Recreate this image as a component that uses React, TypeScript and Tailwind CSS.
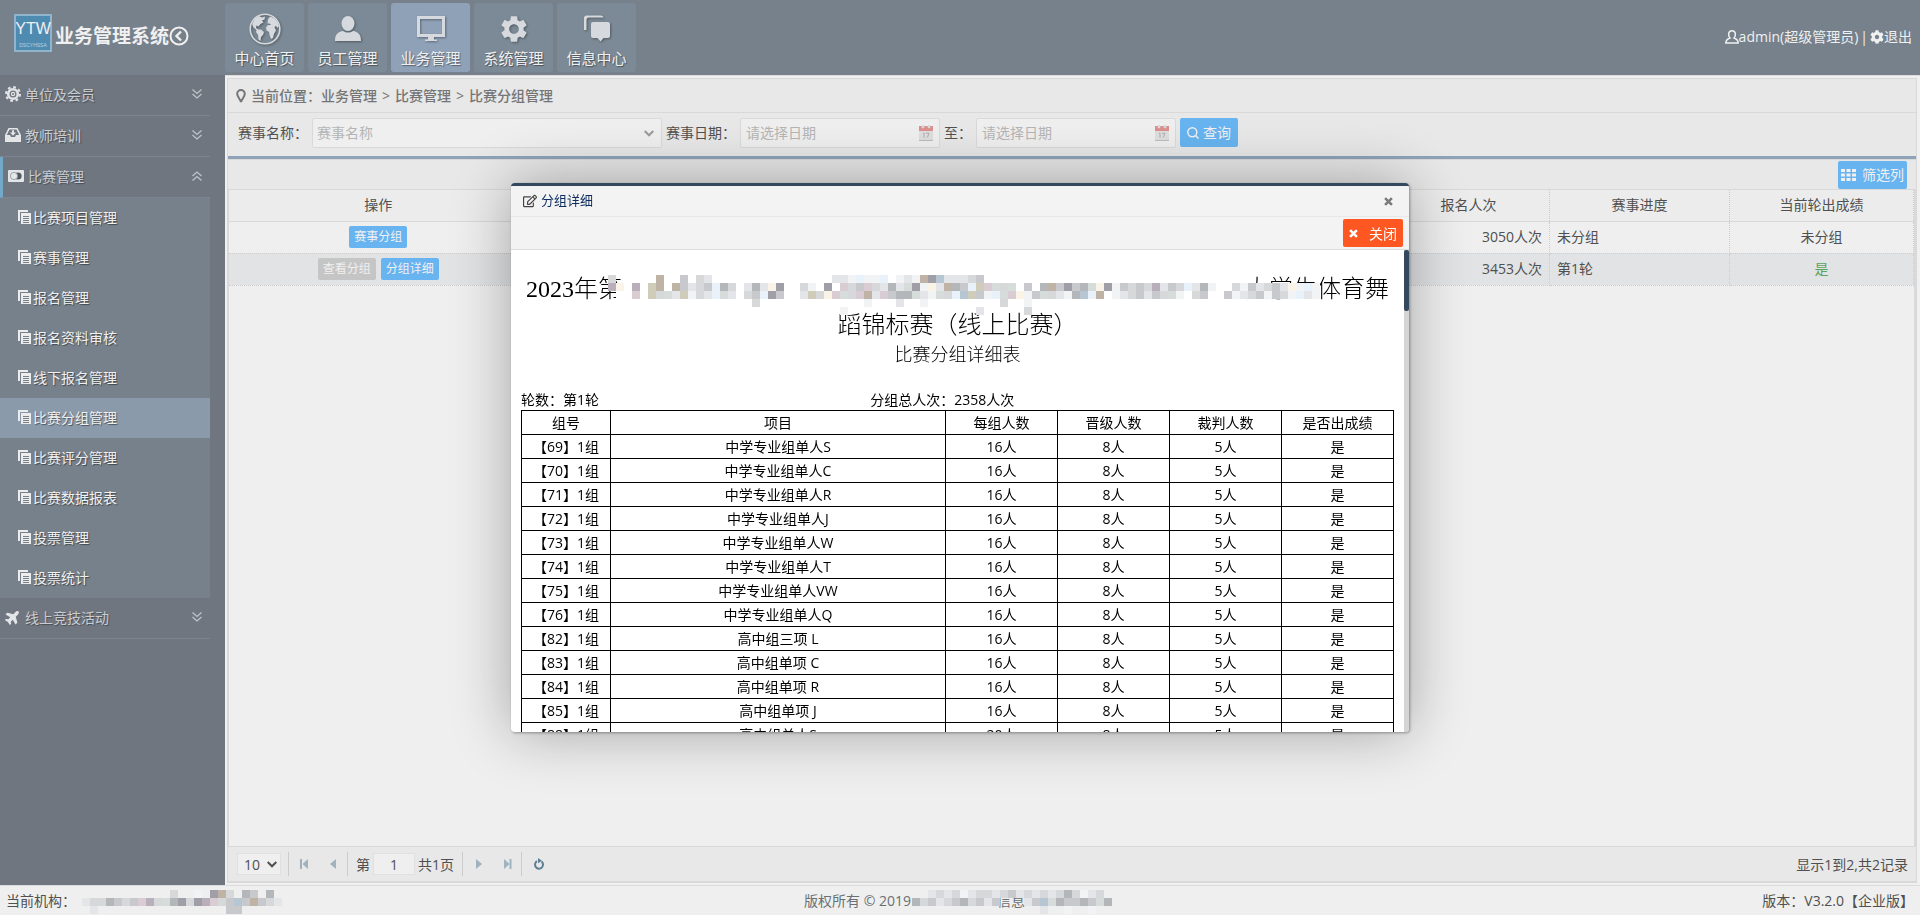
import { useState, type ReactNode } from 'react';
import { FaCog, FaPlane, FaRegEdit } from 'react-icons/fa';
import { MdSettings } from 'react-icons/md';

type IconProps = { className?: string };

function GlobeIcon({ className }: IconProps) {
  return (
    <svg viewBox="0 0 32 32" className={className} fill="currentColor">
      <circle cx="16" cy="16" r="14.8" fill="none" stroke="currentColor" strokeWidth="1.6" />
      <path d="M3 11 L6 5.5 L10 3 L13 4.5 L16 3.5 L15.5 6.5 L13 7.5 L14.5 9.5 L11.5 11 L9.5 13.5 L7.5 12.5 L7 15 L9.5 16.5 L12 16.5 L15 19 L14 22 L12 24 L11.5 28 L9.5 26.5 L9 22 L7 19 L7.5 17 L4.5 14.5 Z" />
      <path d="M19 6.5 L21 3.5 L25 5 L28.5 9 L30 13 L28.5 15 L27 13 L25.5 14 L27 17.5 L25 21 L24 25 L22 26 L20.5 22 L20 19 L17.5 17.5 L17 14.5 L19 12 L22 12 L20.5 10.5 L18.5 10.5 Z" />
    </svg>
  );
}

function PersonIcon({ className }: IconProps) {
  return (
    <svg viewBox="0 0 32 32" className={className} fill="currentColor">
      <ellipse cx="16" cy="10.5" rx="6.5" ry="7.5" />
      <path d="M3 28 C3 21 6 18.8 11 18 C14 20 18 20 21 18 C26 18.8 29 21 29 28 Z" />
    </svg>
  );
}

function MonitorIcon({ className }: IconProps) {
  return (
    <svg viewBox="0 0 32 32" className={className} fill="currentColor">
      <path fillRule="evenodd" d="M2 3 H30 V24 H2 Z M5 6 V21 H27 V6 Z" />
      <path d="M13 24 H19 V26.5 H22 V28 H10 V26.5 H13 Z" />
    </svg>
  );
}

function ChatIcon({ className }: IconProps) {
  return (
    <svg viewBox="0 0 32 32" className={className} fill="currentColor">
      <path d="M3 17 V5 Q3 2.5 5.5 2.5 H20 Q22 2.5 22.5 4.5 H8 Q5.5 4.5 5.5 7 V17 Z" />
      <path d="M12 9 H27 Q29 9 29 11 V23 Q29 25 27 25 H22.5 L19.5 28.5 L16.5 25 H12 Q10 25 10 23 V11 Q10 9 12 9 Z" />
    </svg>
  );
}

function BadgeIcon({ className }: IconProps) {
  return (
    <svg viewBox="0 0 16 16" className={className} fill="none" stroke="currentColor">
      <circle cx="8" cy="8" r="4.8" strokeWidth="2.6" />
      <circle cx="8" cy="8" r="7" strokeWidth="2" strokeDasharray="2.75 2.75" />
      <circle cx="8" cy="8" r="1.6" strokeWidth="1.2" />
    </svg>
  );
}

function InboxIcon({ className }: IconProps) {
  return (
    <svg viewBox="0 0 16 16" className={className} fill="currentColor">
      <path fillRule="evenodd" d="M3.5 1 H12.5 L16 8 V15 H0 V8 Z M4.5 2.4 L1.8 8 H5 L6 10 H10 L11 8 H14.2 L11.5 2.4 Z" />
      <path d="M7 3.2 H9 V5.5 H11 L8 8.8 L5 5.5 H7 Z" />
    </svg>
  );
}

function CardIcon({ className }: IconProps) {
  return (
    <svg viewBox="0 0 16 12" className={className}>
      <rect width="16" height="12" rx="1" fill="currentColor" />
      <circle cx="10" cy="6" r="3.6" fill="#4f5862" />
      <circle cx="6" cy="6" r="3.6" fill="#e6e6e6" stroke="#8b9299" strokeWidth="0.8" />
    </svg>
  );
}

function CopyIcon({ className }: IconProps) {
  return (
    <svg viewBox="0 0 14 14" className={className}>
      <path d="M0 0 H10 V2 H2 V11 H0 Z" fill="currentColor" />
      <rect x="3" y="3" width="10" height="11" fill="currentColor" />
      <path d="M5 6.5 H11 M5 8.5 H11 M5 10.5 H11 M5 12.5 H11" stroke="#76818c" strokeWidth="1" />
    </svg>
  );
}

function DoubleChevron({ up }: { up?: boolean }) {
  return (
    <svg viewBox="0 0 10 10" className="h-[10px] w-[10px] text-[#c0c4c9]" fill="none" stroke="currentColor" strokeWidth="1.3">
      {up ? <path d="M0.5 5 L5 1 L9.5 5 M0.5 9.5 L5 5.5 L9.5 9.5" /> : <path d="M0.5 0.5 L5 4.5 L9.5 0.5 M0.5 5 L5 9 L9.5 5" />}
    </svg>
  );
}

function ChevronDown({ className }: IconProps) {
  return (
    <svg viewBox="0 0 10 7" className={className} fill="none" stroke="currentColor" strokeWidth="2">
      <path d="M0.7 1 L5 5.3 L9.3 1" />
    </svg>
  );
}

function CrossIcon({ className }: IconProps) {
  return (
    <svg viewBox="0 0 10 10" className={className} stroke="currentColor" strokeWidth="2.8">
      <path d="M1.2 1.2 L8.8 8.8 M8.8 1.2 L1.2 8.8" />
    </svg>
  );
}

function CalendarIcon({ className }: IconProps) {
  return (
    <svg viewBox="0 0 14 16" className={className}>
      <rect x="0" y="1" width="14" height="15" fill="#dedede" />
      <rect x="0" y="1" width="14" height="5" fill="#e08f8f" />
      <path d="M0 15.5 H14" stroke="#bcbcbc" />
      <circle cx="4" cy="2" r="1.3" fill="#f3f3f3" stroke="#b5b5b5" strokeWidth="0.6" />
      <circle cx="10" cy="2" r="1.3" fill="#f3f3f3" stroke="#b5b5b5" strokeWidth="0.6" />
      <path d="M4 8.5 L5 8 V12.5 M7 8.3 H10 L8.3 12.5" fill="none" stroke="#a9a9a9" strokeWidth="0.9" />
    </svg>
  );
}

const tabs: { label: string; icon: ReactNode }[] = [
  { label: '中心首页', icon: <GlobeIcon className="h-8 w-8" /> },
  { label: '员工管理', icon: <PersonIcon className="h-8 w-8" /> },
  { label: '业务管理', icon: <MonitorIcon className="h-8 w-8" /> },
  { label: '系统管理', icon: <MdSettings className="h-8 w-8" /> },
  { label: '信息中心', icon: <ChatIcon className="h-8 w-8" /> },
];

const subMenu = [
  '比赛项目管理',
  '赛事管理',
  '报名管理',
  '报名资料审核',
  '线下报名管理',
  '比赛分组管理',
  '比赛评分管理',
  '比赛数据报表',
  '投票管理',
  '投票统计',
];

const groups = [
  ['【69】1组', '中学专业组单人S', '16人'],
  ['【70】1组', '中学专业组单人C', '16人'],
  ['【71】1组', '中学专业组单人R', '16人'],
  ['【72】1组', '中学专业组单人J', '16人'],
  ['【73】1组', '中学专业组单人W', '16人'],
  ['【74】1组', '中学专业组单人T', '16人'],
  ['【75】1组', '中学专业组单人VW', '16人'],
  ['【76】1组', '中学专业组单人Q', '16人'],
  ['【82】1组', '高中组三项 L', '16人'],
  ['【83】1组', '高中组单项 C', '16人'],
  ['【84】1组', '高中组单项 R', '16人'],
  ['【85】1组', '高中组单项 J', '16人'],
  ['【88】1组', '高中组单人S', '20人'],
];

// Redaction mosaics. One letter per 8px cell, '.' is transparent.
const shades: Record<string, string> = {
  w: '#ffffff',
  a: '#f2f3f5',
  b: '#e4e5e8',
  c: '#d7d8d9',
  d: '#c7c9cd',
  e: '#b3b7ba',
  f: '#a09ea6',
  g: '#cfccb9',
  h: '#bfb3a5',
  i: '#d9cdd3',
  j: '#b9afbb',
  k: '#e9f1fa',
  l: '#faf3e8',
  m: '#b6c6d3',
  n: '#d5dcda',
};

const titleMosaic = [
  'c.....h..d.cb...............bbakaak.abahfmbbbcd..........................................',
  'jl.j.ghwhdbcdkecwbeblfwwcawfwicdicbebnfalbhedkgincnwdwehdfdenlfadcdcjbdckbeawwcadbcdblaka',
  '.w.i.gcnbgacbknbwcdkfdwwbgclincihbideenbanckmgdakniladncbaemkhwabcdbdcnawcdwwdabcdadcakba',
  '..................c.............a...b..a.........c..a....................................',
  '.............................a................b.....c....................................',
];
const orgMosaic = ['............c..a.fhc.ed.e.', '.bccedcdijcnefcfjicdmdhdcb', '..b................dd.....'];
const copyMosaic = ['..bcbcabccbcdbcbcbcecabc.', 'ecdbcdecdbd...bdmneddedne', '................b..a..a..'];

function Mosaic({ rows, className }: { rows: string[]; className: string }) {
  const cols = Math.max(...rows.map((r) => r.length));
  return (
    <svg
      aria-hidden="true"
      width={cols * 8}
      height={rows.length * 8}
      className={`pointer-events-none absolute ${className}`}
      shapeRendering="crispEdges"
    >
      {rows.map((row, y) =>
        row.split('').map((cell, x) =>
          cell === '.' ? null : <rect key={`${x}-${y}`} x={x * 8} y={y * 8} width="8" height="8" fill={shades[cell]} />
        )
      )}
    </svg>
  );
}

function Header() {
  return (
    <header className="flex h-[75px] shrink-0 items-start bg-[#76818c] text-[#f0f0f0]">
      <div className="flex w-[225px] items-end pt-3.5 pl-3.5">
        <div className="flex h-[38px] w-[38px] flex-col items-center justify-center border-2 border-[#8fb4cb] bg-[#4f8bb0] font-['Liberation_Sans',sans-serif]">
          <span className="text-[16px] leading-[24px]">YTW</span>
          <span className="text-[5px] leading-[8px] text-[#b9d2e0]">DSCYHSSA</span>
        </div>
        <div className="ml-[3px] flex items-center">
          <h1 className="text-[19px] leading-[32px] font-bold">业务管理系统</h1>
          <button aria-label="收起菜单">
            <svg viewBox="0 0 20 20" className="h-5 w-5" fill="none" stroke="currentColor" strokeWidth="2">
              <circle cx="10" cy="10" r="8.5" />
              <path d="M12 5.5 L7.5 10 L12 14.5" strokeWidth="2.4" />
            </svg>
          </button>
        </div>
      </div>
      <nav className="flex gap-1 pt-[3px]">
        {tabs.map((tab) => (
          <button
            key={tab.label}
            className={`flex h-[69px] w-[79px] flex-col items-center rounded-[3px] pt-2 ${
              tab.label === '业务管理' ? 'bg-[#8fa1b7]' : 'bg-[#7b8a96]'
            }`}
          >
            <span className="flex h-9 items-center justify-center text-[#d6d9dd] drop-shadow-[1px_1px_1px_rgba(0,0,0,0.35)]">
              {tab.icon}
            </span>
            <span className="text-[15px] leading-[22px] [text-shadow:1px_1px_1px_rgba(0,0,0,0.4)]">{tab.label}</span>
          </button>
        ))}
      </nav>
      <div className="ml-auto flex items-center pt-[27px] pr-2 text-[14px] leading-[20px]">
        <svg viewBox="0 0 14 14" className="h-3.5 w-3.5" fill="none" stroke="currentColor" strokeWidth="1.5">
          <path d="M5 8 C2.5 5 3.5 0.8 7 0.8 C10.5 0.8 11.5 5 9 8 C11.5 9 13.2 10 13.2 13 H0.8 C0.8 10 2.5 9 5 8 Z" />
        </svg>
        <span>admin(超级管理员)</span>
        <span className="px-0.5">|</span>
        <a href="#" className="flex items-center">
          <FaCog className="h-3.5 w-3.5" />
          退出
        </a>
      </div>
    </header>
  );
}

function MenuSection({ icon, label, open }: { icon: ReactNode; label: string; open?: boolean }) {
  return (
    <button
      className={`flex h-[41px] w-full items-center gap-1 border-b border-[#7b8591] pr-2 pb-0.5 text-[14px] text-[#c9cdd2] [text-shadow:1px_1px_1px_rgba(0,0,0,0.35)] ${
        open ? 'border-l-[3px] border-l-[#72a9c8] pl-[5px]' : 'pl-[5px]'
      }`}
    >
      {icon}
      <span className="flex-1 text-left">{label}</span>
      <DoubleChevron up={open} />
    </button>
  );
}

function Sidebar() {
  const [current, setCurrent] = useState('比赛分组管理');

  return (
    <aside className="w-[225px] shrink-0 bg-[#6f7680] pr-[15px]">
      <MenuSection icon={<BadgeIcon className="h-4 w-4 text-[#e3e5e7]" />} label="单位及会员" />
      <MenuSection icon={<InboxIcon className="h-4 w-4 text-[#e3e5e7]" />} label="教师培训" />
      <MenuSection icon={<CardIcon className="h-3 w-4 text-[#e3e5e7]" />} label="比赛管理" open />
      <ul className="bg-[#76818c]">
        {subMenu.map((item) => (
          <li key={item}>
            <button
              onClick={() => setCurrent(item)}
              className={`flex h-10 w-full items-center gap-px pb-0.5 pl-[18px] text-[14px] text-[#f0f0f0] [text-shadow:1px_1px_1px_rgba(0,0,0,0.45)] ${
                current === item ? 'bg-[#8a9aaa]' : ''
              }`}
            >
              <CopyIcon className="h-3.5 w-3.5 text-[#ececec]" />
              {item}
            </button>
          </li>
        ))}
      </ul>
      <MenuSection icon={<FaPlane className="h-4 w-4 -rotate-45 text-[#e3e5e7]" />} label="线上竞技活动" />
    </aside>
  );
}

function DateField({ id, label }: { id: string; label: string }) {
  return (
    <>
      <label htmlFor={id}>{label}</label>
      <span className="relative flex">
        <input
          id={id}
          placeholder="请选择日期"
          className="h-[30px] w-[200px] rounded-[2px] border border-[#d9d9d9] bg-[#efefef] pl-[5px] text-[14px] placeholder:text-[#b5b5b5]"
        />
        <CalendarIcon className="pointer-events-none absolute top-[7px] right-[7px] h-4 w-3.5" />
      </span>
    </>
  );
}

function FilterForm() {
  return (
    <form className="flex h-[43px] items-center gap-1 pb-1 pl-[10px] text-[14px]" onSubmit={(e) => e.preventDefault()}>
      <label htmlFor="match">赛事名称：</label>
      <span className="relative flex">
        <select
          id="match"
          className="h-[30px] w-[350px] appearance-none rounded-[2px] border border-[#d9d9d9] bg-[#efefef] pl-1 text-[#b5b5b5]"
        >
          <option>赛事名称</option>
        </select>
        <ChevronDown className="pointer-events-none absolute top-3 right-2 h-[7px] w-[10px] text-[#9b9b9b]" />
      </span>
      <DateField id="from" label="赛事日期：" />
      <DateField id="to" label="至：" />
      <button className="flex h-[29px] w-[58px] items-center justify-center gap-1 rounded-[2px] bg-[#67b4f0] text-[#f0f0f0]">
        <svg viewBox="0 0 12 12" className="h-3 w-3" fill="none" stroke="currentColor" strokeWidth="1.5">
          <circle cx="5.3" cy="5.3" r="4.5" />
          <path d="M8.5 8.5 L11.5 11.5" />
        </svg>
        查询
      </button>
    </form>
  );
}

function MatchTable() {
  return (
    <table className="w-full table-fixed border-collapse text-[14px] leading-[20px]">
      <colgroup>
        <col className="w-[299px]" />
        <col />
        <col className="w-[162px]" />
        <col className="w-[180px]" />
        <col className="w-[184px]" />
      </colgroup>
      <thead>
        <tr className="h-[31px] border-b border-[#d9d9d9] bg-[#ececec]">
          <th className="border-r border-dotted border-r-[#cccccc] font-normal">操作</th>
          <th className="border-r border-dotted border-r-[#cccccc] font-normal" />
          <th className="border-r border-dotted border-r-[#cccccc] font-normal">报名人次</th>
          <th className="border-r border-dotted border-r-[#cccccc] font-normal">赛事进度</th>
          <th className="border-r border-dotted border-r-[#cccccc] font-normal">当前轮出成绩</th>
        </tr>
      </thead>
      <tbody>
        <tr className="h-8">
          <td className="border-r border-b border-dotted border-[#cccccc] text-center">
            <button className="h-[22px] w-[58px] rounded-[2px] bg-[#67b4f0] align-middle text-[12px] text-[#f0f0f0]">赛事分组</button>
          </td>
          <td className="border-r border-b border-dotted border-[#cccccc]" />
          <td className="border-r border-b border-dotted border-[#cccccc] pr-[7px] text-right">3050人次</td>
          <td className="border-r border-b border-dotted border-[#cccccc] pl-[7px]">未分组</td>
          <td className="border-r border-b border-dotted border-[#cccccc] text-center">未分组</td>
        </tr>
        <tr className="h-8 bg-[#e1e3e5]">
          <td className="border-r border-b border-dotted border-[#cccccc] text-center">
            <div className="flex justify-center gap-[5px]">
              <button className="h-[22px] w-[58px] rounded-[2px] bg-[#c5c5c5] text-[12px] text-[#f0f0f0]">查看分组</button>
              <button className="h-[22px] w-[58px] rounded-[2px] bg-[#67b4f0] text-[12px] text-[#f0f0f0]">分组详细</button>
            </div>
          </td>
          <td className="border-r border-b border-dotted border-[#cccccc]" />
          <td className="border-r border-b border-dotted border-[#cccccc] pr-[7px] text-right">3453人次</td>
          <td className="border-r border-b border-dotted border-[#cccccc] pl-[7px]">第1轮</td>
          <td className="border-r border-b border-dotted border-[#cccccc] text-center text-[#5aa45e]">是</td>
        </tr>
      </tbody>
    </table>
  );
}

function Separator() {
  return <span className="h-6 w-px bg-[#cccccc]" />;
}

function PagerButton({ label, children }: { label: string; children: ReactNode }) {
  return (
    <button aria-label={label} className="flex h-6 w-[29px] items-center justify-center text-[#9fb2c0]">
      <svg viewBox="0 0 12 12" className="h-3 w-3" fill="currentColor">
        {children}
      </svg>
    </button>
  );
}

function Pager() {
  return (
    <div className="flex h-[35px] shrink-0 items-center border-t border-[#d9d9d9] bg-[#e8e8e8] pr-2 pl-[9px] text-[14px]">
      <span className="relative mr-[7px] flex">
        <select
          aria-label="每页条数"
          defaultValue="10"
          className="h-[22px] w-11 appearance-none border border-[#e0e0e0] bg-[#efefef] pl-1.5"
        >
          <option>10</option>
          <option>20</option>
        </select>
        <ChevronDown className="pointer-events-none absolute top-2 right-1 h-[7px] w-[10px]" />
      </span>
      <Separator />
      <PagerButton label="首页">
        <path d="M2 1 H4 V11 H2 Z M10 1 V11 L4.5 6 Z" />
      </PagerButton>
      <PagerButton label="上一页">
        <path d="M9 1 V11 L3 6 Z" />
      </PagerButton>
      <Separator />
      <label htmlFor="page" className="ml-2">
        第
      </label>
      <input id="page" defaultValue="1" className="mx-[3px] h-[22px] w-[42px] border border-[#e0e0e0] bg-[#efefef] text-center" />
      <span className="mr-2">共1页</span>
      <Separator />
      <PagerButton label="下一页">
        <path d="M4 1 V11 L10 6 Z" />
      </PagerButton>
      <PagerButton label="末页">
        <path d="M3 1 V11 L8.5 6 Z M8.5 1 H10.5 V11 H8.5 Z" />
      </PagerButton>
      <Separator />
      <button aria-label="刷新" className="flex h-6 w-[33px] items-center justify-center text-[#5f7f95]">
        <svg viewBox="0 0 12 12" className="h-3 w-3" fill="none" stroke="currentColor" strokeWidth="2">
          <path d="M4 3.2 A4 4 0 1 0 8.5 3.5" />
          <path d="M5 0 L9 2.8 L5 5.2 Z" fill="currentColor" stroke="none" />
        </svg>
      </button>
      <span className="ml-auto">显示1到2,共2记录</span>
    </div>
  );
}

function GroupDialog({ onClose }: { onClose: () => void }) {
  return (
    <div className="pointer-events-none fixed inset-0 flex items-center justify-center">
      <section
        role="dialog"
        aria-label="分组详细"
        className="pointer-events-auto flex h-[549px] w-[898px] max-w-full flex-col overflow-hidden rounded-[4px] border-t-[3px] border-[#34495e] bg-white text-black shadow-[1px_1px_3px_rgba(0,0,0,0.35),0_0_60px_rgba(0,0,0,0.32)]"
      >
        <div className="flex h-[31px] shrink-0 items-center border-b border-[#e6e8ea] bg-[#f3f3f3] pr-4 pl-3">
          <FaRegEdit className="h-3.5 w-3.5 text-[#444444]" />
          <h2 className="ml-1 flex-1 text-[13px] text-[#0e2d5f]">分组详细</h2>
          <button aria-label="关闭窗口" onClick={onClose}>
            <CrossIcon className="h-[9px] w-[9px] text-[#7b7b7b]" />
          </button>
        </div>
        <div className="flex h-[33px] shrink-0 items-center justify-end border-b border-[#dddddd] bg-[#f3f3f3] pr-1.5">
          <button
            onClick={onClose}
            className="flex h-7 w-[60px] items-center justify-between rounded-[2px] bg-[#ff5722] px-1.5 text-[14px] text-white"
          >
            <CrossIcon className="h-[9px] w-[9px]" />
            关闭
          </button>
        </div>
        <div className="flex min-h-0 flex-1">
          <div className="min-w-0 flex-1 overflow-hidden pt-[21px] pr-[10px] pl-[10px]">
            <div className="relative text-center font-['Liberation_Serif','Noto_Sans_CJK_SC',serif] font-light">
              <div className="flex justify-between px-[5px] text-[24px] leading-[36px]">
                <span>2023年第</span>
                <span>大学生体育舞</span>
              </div>
              <div className="text-[24px] leading-[36px]">蹈锦标赛（线上比赛）</div>
              <div className="text-[18px] leading-[24px]">比赛分组详细表</div>
              <Mosaic rows={titleMosaic} className="top-1 left-[87px]" />
            </div>
            <div className="mt-[23px] flex text-[14px] leading-[20px]">
              <span className="w-2/5">轮数：第1轮</span>
              <span>分组总人次：2358人次</span>
            </div>
            <table className="w-full table-fixed border-collapse text-center text-[14px] leading-[20px]">
              <colgroup>
                <col className="w-[89px]" />
                <col />
                <col className="w-[112px]" />
                <col className="w-[112px]" />
                <col className="w-[112px]" />
                <col className="w-[112px]" />
              </colgroup>
              <thead>
                <tr className="h-6">
                  {['组号', '项目', '每组人数', '晋级人数', '裁判人数', '是否出成绩'].map((name) => (
                    <th key={name} className="border border-black font-normal">
                      {name}
                    </th>
                  ))}
                </tr>
              </thead>
              <tbody>
                {groups.map(([no, name, size]) => (
                  <tr key={no} className="h-6">
                    <td className="border border-black">{no}</td>
                    <td className="border border-black">{name}</td>
                    <td className="border border-black">{size}</td>
                    <td className="border border-black">8人</td>
                    <td className="border border-black">5人</td>
                    <td className="border border-black">是</td>
                  </tr>
                ))}
              </tbody>
            </table>
          </div>
          <div className="w-[5px] bg-[#d5d5d5]">
            <div className="h-[61px] rounded-[2px] bg-[#34495e]" />
          </div>
        </div>
      </section>
    </div>
  );
}

export default function App() {
  const [dialogOpen, setDialogOpen] = useState(true);

  return (
    <div className="flex h-screen flex-col bg-[#f0f0f0] font-['Open_Sans','Noto_Sans_CJK_SC',sans-serif] text-[#505050]">
      <Header />
      <div className="flex min-h-0 flex-1">
        <Sidebar />
        <main className="flex min-w-0 flex-1 flex-col border-t border-[#dcdcdc] pt-0.5 pr-[3px] pb-0.5 pl-0.5">
          <div className="flex min-h-0 flex-1 flex-col border border-b-2 border-[#d9d9d9] bg-[#e8e8e8]">
            <div className="flex h-[34px] items-center gap-[5px] border-b border-[#d9d9d9] pl-2 text-[14px] font-medium text-[#757575]">
              <svg viewBox="0 0 10 14" className="h-3.5 w-[10px]" fill="none" stroke="currentColor" strokeWidth="2">
                <path d="M5 13 C4.5 10.5 1.2 8 1.2 4.8 A3.8 3.8 0 0 1 8.8 4.8 C8.8 8 5.5 10.5 5 13 Z" />
              </svg>
              <span>当前位置：业务管理</span>
              <span>&gt;</span>
              <span>比赛管理</span>
              <span>&gt;</span>
              <span>比赛分组管理</span>
            </div>
            <FilterForm />
            <div className="flex min-h-0 flex-1 flex-col border-t-[3px] border-[#8fa3b8]">
              <div className="flex h-[31px] shrink-0 items-center justify-end border-y border-[#d9d9d9] pr-[9px]">
                <button className="flex h-7 w-[69px] items-center justify-between rounded-[2px] bg-[#67b4f0] px-[3px] text-[14px] text-[#f0f0f0]">
                  <svg viewBox="0 0 15 12" className="h-3 w-[15px]" fill="currentColor">
                    <path d="M0 0h4v3H0zM5.5 0h4v3h-4zM11 0h4v3h-4zM0 4.5h4v3H0zM5.5 4.5h4v3h-4zM11 4.5h4v3h-4zM0 9h4v3H0zM5.5 9h4v3h-4zM11 9h4v3h-4z" />
                  </svg>
                  筛选列
                </button>
              </div>
              <div className="min-h-0 flex-1 border-r-2 border-l border-[#d9d9d9] bg-[#efefef]">
                <MatchTable />
              </div>
              <Pager />
            </div>
          </div>
        </main>
      </div>
      <footer className="flex h-[30px] shrink-0 items-center border-t border-[#dcdcdc] bg-[#efefef] px-1.5 text-[14px]">
        <div className="relative flex-1">
          当前机构：
          <Mosaic rows={orgMosaic} className="top-0 left-[68px]" />
        </div>
        <div className="relative flex w-[312px] text-[#6a6f74]">
          版权所有 © 2019
          <span className="ml-[86px]">信息</span>
          <Mosaic rows={copyMosaic} className="top-0 left-[108px]" />
        </div>
        <div className="flex-1 text-right">版本：V3.2.0【企业版】</div>
      </footer>
      {dialogOpen && <GroupDialog onClose={() => setDialogOpen(false)} />}
    </div>
  );
}
